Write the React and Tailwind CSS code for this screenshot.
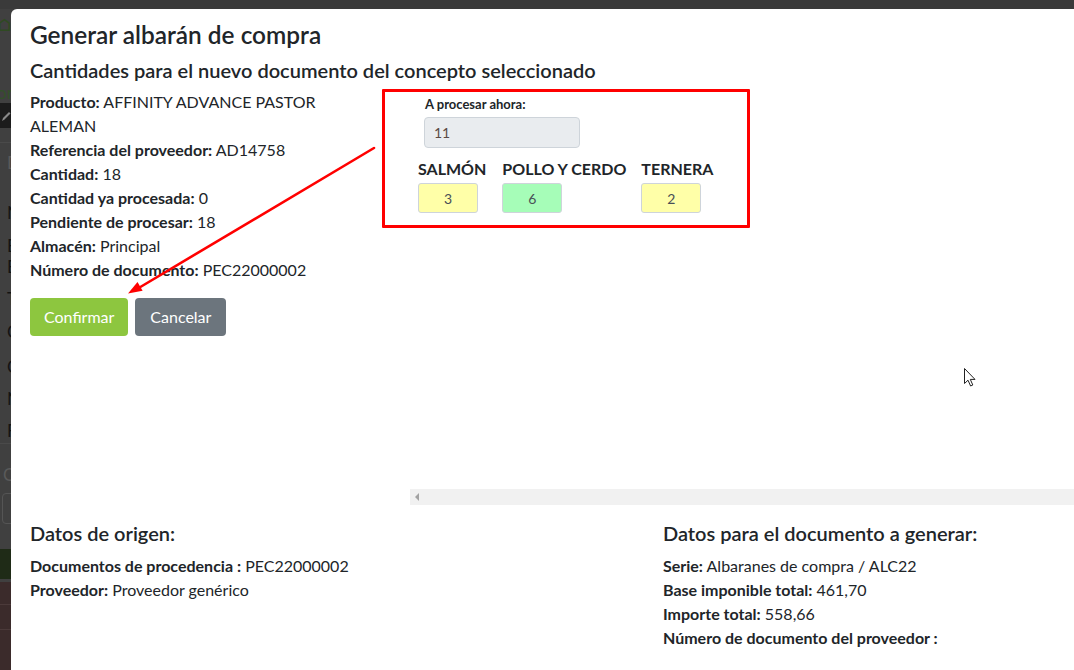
import React from 'react';

const Info = ({ label, value }) => (
    <div>
        <span className="font-bold">{label}</span> {value}
    </div>
);

const ColorInput = ({ value, bg }) => (
    <div className={`w-[60px] h-[30px] border border-[#ced4da] rounded-[3px] flex items-center justify-center text-[14px] text-[#495057] ${bg}`}>
        {value}
    </div>
);

// darkened page behind the modal, only an 11px sliver is visible
const BackdropStrip = () => (
    <div className="w-[11px] shrink-0 overflow-hidden flex flex-col text-[17px] leading-[20px] whitespace-nowrap">
        <div className="h-[94px] bg-[#404040]">
            <div className="ml-[-2px] mt-[6px] w-[7px] h-[14px] text-[#2f4a22] font-bold">⌂</div>
            <div className="mt-[54px] ml-[-3px] text-[#33502a]">on</div>
        </div>
        <div className="h-[25px] bg-[#1c1c1c] flex items-center pl-[1px]">
            <svg width="10" height="12" viewBox="0 0 10 12">
                <path d="M1 11 L2 8 L8 2 L9.5 3.5 L3.5 9.5 Z" fill="#8a8a8a" />
            </svg>
        </div>
        <div className="h-[15px] bg-[#404040] border-b border-[#4a4a4a]" />
        <div className="bg-[#404040] pl-[7px] flex flex-col text-[#141414]">
            <div className="h-[40px] pt-[10px] text-[#5a5a5a]">D</div>
            <div className="h-[37px] pt-[20px]">N</div>
            <div className="h-[29px] pt-[16px]">E</div>
            <div className="h-[31px] pt-[8px]">E</div>
            <div className="h-[33px] pt-[9px]">T</div>
            <div className="h-[34px] pt-[9px]">C</div>
            <div className="h-[33px] pt-[10px]">C</div>
            <div className="h-[31px] pt-[9px]">N</div>
            <div className="h-[32px] pt-[10px]">F</div>
        </div>
        <div className="h-[106px] bg-[#404040] border-t border-[#4a4a4a]">
            <div className="pt-[21px] pl-[3px] text-[#5a5a5a]">C</div>
            <div className="mt-[8px] ml-[2px] w-[20px] h-[31px] border border-[#555] rounded-[4px]" />
        </div>
        <div className="h-[30px] bg-[#1f2b17]" />
        <div className="h-[3px] bg-[#404040]" />
        <div className="flex-1 bg-[#3b2b2b] flex flex-col">
            <div className="h-[23px] border-b border-[#4b3a3a]" />
            <div className="h-[25px] border-b border-[#4b3a3a]" />
        </div>
    </div>
);

const App = () => {
    return (
        <div className="relative w-[1074px] h-[670px] overflow-hidden bg-[#3f3f3f] font-['Lato',sans-serif] text-[#212529]">
            <div className="h-[9px] bg-[#3a3a3a]" />
            <div className="flex h-[661px]">
                <BackdropStrip />
                <div className="flex-1 min-w-0 bg-white rounded-tl-[6px] pl-[19px] pt-[11px] overflow-hidden">
                    <h4 className="text-[24.4px] leading-[29px] font-semibold whitespace-nowrap">Generar albarán de compra</h4>
                    <h5 className="mt-[9px] text-[20px] leading-[24px] font-semibold whitespace-nowrap">
                        Cantidades para el nuevo documento del concepto seleccionado
                    </h5>

                    <div className="mt-[8px] flex h-[415px]">
                        <div className="w-[330px] shrink-0 text-[16px] leading-[24px]">
                            <Info label="Producto:" value="AFFINITY ADVANCE PASTOR ALEMAN" />
                            <Info label="Referencia del proveedor:" value="AD14758" />
                            <Info label="Cantidad:" value="18" />
                            <Info label="Cantidad ya procesada:" value="0" />
                            <Info label="Pendiente de procesar:" value="18" />
                            <Info label="Almacén:" value="Principal" />
                            <Info label="Número de documento:" value="PEC22000002" />
                            <div className="mt-[16px] flex gap-[7px]">
                                <button className="h-[38px] px-[14px] rounded-[4px] bg-[#8dc63f] text-white text-[16px]">Confirmar</button>
                                <button className="h-[38px] px-[15px] rounded-[4px] bg-[#6c757d] text-white text-[16px]">Cancelar</button>
                            </div>
                        </div>

                        <div className="ml-[50px] flex-1 min-w-0 flex flex-col">
                            <div className="flex-1 pt-[4px]">
                                <div className="pl-[14px]">
                                    <div className="pl-px text-[13px] leading-[20px] font-bold">A procesar ahora:</div>
                                    <div className="mt-[3px] w-[156px] h-[31px] bg-[#e9ecef] border border-[#ced4da] rounded-[4px] flex items-center pl-[9px] text-[14px] text-[#5b4a44]">
                                        11
                                    </div>
                                </div>
                                <div className="mt-[11px] flex">
                                    <div className="px-2">
                                        <div className="text-[16px] leading-[20px] font-bold uppercase whitespace-nowrap">Salmón</div>
                                        <div className="mt-[4px]"><ColorInput value="3" bg="bg-[#ffffa8]" /></div>
                                    </div>
                                    <div className="px-2">
                                        <div className="text-[16px] leading-[20px] font-bold uppercase whitespace-nowrap">Pollo y cerdo</div>
                                        <div className="mt-[4px]"><ColorInput value="6" bg="bg-[#a6fdb8]" /></div>
                                    </div>
                                    <div className="pl-[7px] pr-2">
                                        <div className="text-[16px] leading-[20px] font-bold uppercase whitespace-nowrap">Ternera</div>
                                        <div className="mt-[4px]"><ColorInput value="2" bg="bg-[#ffffa8]" /></div>
                                    </div>
                                </div>
                            </div>
                            <div className="h-[16px] bg-[#f1f1f1] flex items-center pl-[5px]">
                                <div className="w-0 h-0 border-y-[4px] border-y-transparent border-r-[4px] border-r-[#a3a3a3]" />
                            </div>
                        </div>
                    </div>

                    <div className="mt-[16px] flex text-[16px] leading-[24px]">
                        <div className="w-[633px] shrink-0">
                            <h5 className="text-[20px] leading-[24px] font-semibold mb-[9px]">Datos de origen:</h5>
                            <Info label="Documentos de procedencia :" value="PEC22000002" />
                            <Info label="Proveedor:" value="Proveedor genérico" />
                        </div>
                        <div className="flex-1 whitespace-nowrap">
                            <h5 className="text-[20px] leading-[24px] font-semibold mb-[9px]">Datos para el documento a generar:</h5>
                            <Info label="Serie:" value="Albaranes de compra / ALC22" />
                            <Info label="Base imponible total:" value="461,70" />
                            <Info label="Importe total:" value="558,66" />
                            <Info label="Número de documento del proveedor :" value="" />
                        </div>
                    </div>
                </div>
            </div>

            {/* annotation overlay: red frame and arrow */}
            <div className="absolute left-[382px] top-[89px] w-[368px] h-[139px] border-[3px] border-[#ff0000] rounded-[1px] pointer-events-none" />
            <svg className="absolute left-0 top-0 pointer-events-none" width="1074" height="670">
                <line x1="374" y1="148" x2="137" y2="289" stroke="#ff0000" strokeWidth="2.6" strokeLinecap="round" />
                <polygon points="128,293.5 142.6,290.7 137.5,282.1" fill="#ff0000" />
            </svg>

            {/* mouse pointer */}
            <svg className="absolute left-[963px] top-[367px] pointer-events-none" width="14" height="21" viewBox="0 0 14 21">
                <path d="M1.5 1.5 L1.5 16.5 L5 13.2 L7.6 19 L9.8 18 L7.3 12.4 L12 12.4 Z" fill="white" stroke="#222" strokeWidth="1" strokeLinejoin="round" />
            </svg>
        </div>
    );
};

export default App;
